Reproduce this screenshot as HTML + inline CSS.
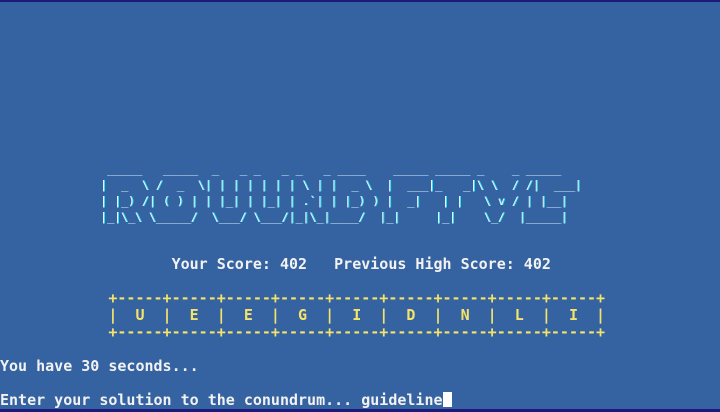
<!DOCTYPE html>
<html><head><style>
body{margin:0;width:720px;height:412px;background:#3562a0;overflow:hidden;position:relative;font-family:"Liberation Mono",monospace;}
.top{position:absolute;left:0;top:0;width:720px;height:2px;background:#1c1a7a}
.bot{position:absolute;left:0;top:409px;width:720px;height:3px;background:#1c1a7a}
pre{margin:0;position:absolute;white-space:pre;}
.art{left:100px;top:161px;font-size:11.6px;line-height:16px;color:#e8f6ff;text-shadow:1px 0 #2fe0f0;}
.t{font-size:15px;line-height:17px;font-weight:bold;color:#f2f2f2;}
.y{color:#f3e36a;}
.cur{display:inline-block;width:9px;height:15px;background:#fff;vertical-align:-2px}
</style></head><body>
<div class="top"></div>
<pre class="art"> _____   _____  _   _ _   _ _   _ ____    _____ _____ _    _ _____
|  _  \ /  _  \| | | | | | | \ | |  _ \  |  ___|_   _|\ \  / /|  ___|
| |_) /| ( ) | | |_| | |_| | .`| | |_) ) |  _|   | |   \ v / | |__|
|_|\_\ \_____/  \___/ \___/|_|\_|____/  |_|     |_|    \_/  |_____|</pre>
<pre class="t" style="left:0;top:256px">                   Your Score: 402   Previous High Score: 402</pre>
<pre class="t y" style="left:0;top:290px">            +-----+-----+-----+-----+-----+-----+-----+-----+-----+
            |  U  |  E  |  E  |  G  |  I  |  D  |  N  |  L  |  I  |
            +-----+-----+-----+-----+-----+-----+-----+-----+-----+</pre>
<pre class="t" style="left:0;top:358px">You have 30 seconds...

Enter your solution to the conundrum... guideline<span class="cur"></span></pre>
<div class="bot"></div>
</body></html>
